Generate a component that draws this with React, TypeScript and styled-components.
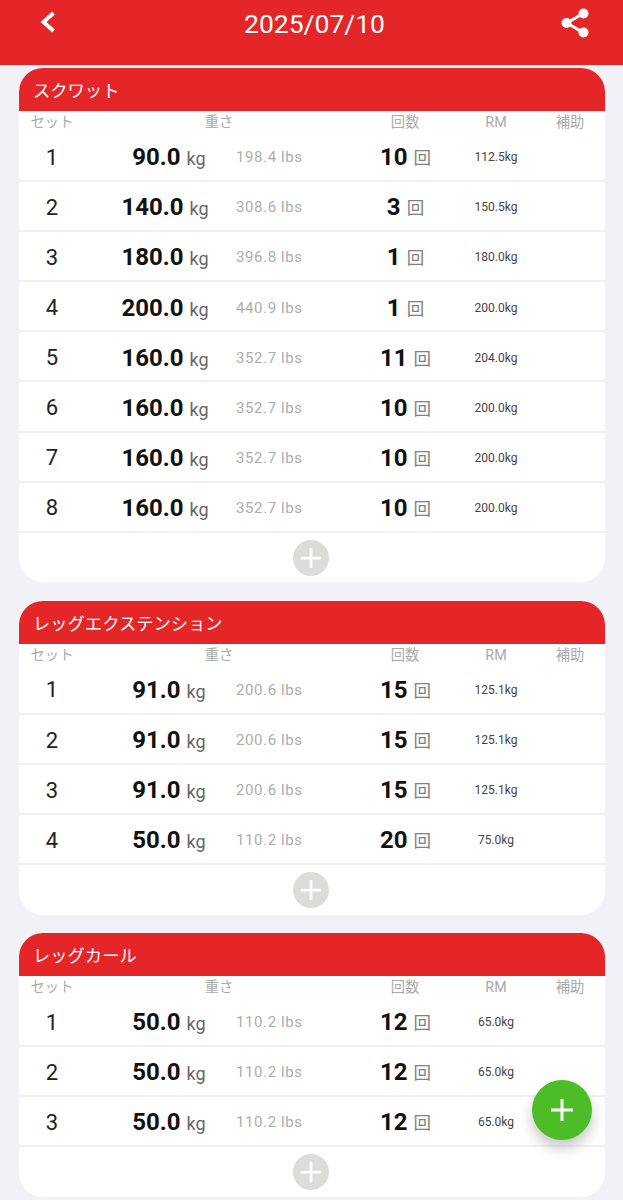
import React from "react";
import styled, { createGlobalStyle } from "styled-components";

const Global = createGlobalStyle`
  html, body { margin: 0; padding: 0; background: #f1f1f7; }
  body { font-family: Roboto, "Noto Sans CJK JP", sans-serif; }
  #root { height: 1200px; overflow: hidden; }
`;

const Page = styled.div`
  position: relative;
  width: 623px;
  height: 1200px;
  overflow: hidden;
`;
const Header = styled.header`
  height: 49px;
  background: #e52629;
  border-bottom: 2px solid #f8f8fb;
  display: grid;
  grid-template-columns: 96px 1fr 96px;
  padding-bottom: 16px;
  color: #fff;
`;
const BackSlot = styled.div`
  padding: 11px 0 0 40px;
`;
const ShareSlot = styled.div`
  padding: 7px 0 0 33px;
`;
const Title = styled.h1`
  margin: 0;
  padding: 7px 0 0 6px;
  text-align: center;
  font: 400 26.5px/33px Roboto, sans-serif;
`;
const List = styled.main`
  padding: 1px 18px 0 19px;
  display: flex;
  flex-direction: column;
  gap: 18.4px;
`;
const Card = styled.section`
  background: #fff;
  border-radius: 24px;
  overflow: hidden;
`;
const CardTitle = styled.h2`
  margin: 0;
  height: 43px;
  background: #e52629;
  color: #fff;
  padding: 0 0 0 14px;
  font: 400 17.3px/43px "Noto Sans CJK JP", sans-serif;
`;
const Columns = "66px 268px 104px 78px 70px";
const ColHead = styled.div`
  display: grid;
  grid-template-columns: ${Columns};
  height: 21px;
  box-sizing: border-box;
  padding-top: 1px;
  text-align: center;
  color: #aaaaaa;
  font: 400 14.3px/21px Roboto, "Noto Sans CJK JP", sans-serif;
`;
const Row = styled.div`
  display: grid;
  grid-template-columns: ${Columns};
  height: 50.1px;
  box-sizing: border-box;
  padding-top: 2.5px;
  border-bottom: 2px solid #f1f1f3;
  align-items: center;
  text-align: center;
`;
const SetNo = styled.div`
  font-size: 22px;
  color: #222;
`;
const Weight = styled.div`
  display: grid;
  grid-template-columns: 134px auto;
  column-gap: 4px;
  padding-left: 13px;
  align-items: center;
  text-align: left;
`;
const WeightMain = styled.div<{ $short: boolean }>`
  text-align: center;
  white-space: nowrap;
  padding-left: ${(p) => (p.$short ? "8px" : "0")};
`;
const Big = styled.b`
  font-size: 24px;
  font-weight: 700;
  color: #111;
`;
const Kg = styled.span`
  font-size: 18px;
  color: #666;
  margin-left: 6px;
`;
const Lbs = styled.div`
  font-size: 15px;
  color: #adadad;
  letter-spacing: 0.6px;
`;
const Reps = styled.div`
  display: flex;
  justify-content: center;
  align-items: center;
  gap: 6px;
  padding-left: 1px;
  white-space: nowrap;
`;
const RepsUnit = styled.span`
  font: 400 17.5px/24px "Noto Sans CJK JP", sans-serif;
  color: #808080;
  opacity: 0.99;
`;
const Rm = styled.div`
  font-size: 12px;
  color: #444;
`;
const AddRow = styled.div`
  height: 49.5px;
  padding-right: 2px;
  display: flex;
  align-items: center;
  justify-content: center;
`;
const AddButton = styled.button`
  width: 36px;
  height: 36px;
  padding: 0;
  border: 0;
  border-radius: 50%;
  background: #dcdcd9;
  display: flex;
  align-items: center;
  justify-content: center;
`;
const Fab = styled.button`
  position: absolute;
  left: 532px;
  top: 1080px;
  width: 60px;
  height: 60px;
  padding: 0;
  border: 0;
  border-radius: 50%;
  background: #4cbc27;
  box-shadow: 0 8px 14px rgba(0, 0, 0, 0.22);
  display: flex;
  align-items: center;
  justify-content: center;
`;

const Plus = ({ size, width }: { size: number; width: number }) => (
  <svg width={size} height={size} viewBox="0 0 24 24">
    <path d="M12 1V23M1 12H23" stroke="#fff" strokeWidth={width} fill="none" />
  </svg>
);

type SetRow = [string, string, string, string];
type Exercise = { name: string; rows: SetRow[] };

const data: Exercise[] = [
  {
    name: "スクワット",
    rows: [
      ["90.0", "198.4", "10", "112.5kg"],
      ["140.0", "308.6", "3", "150.5kg"],
      ["180.0", "396.8", "1", "180.0kg"],
      ["200.0", "440.9", "1", "200.0kg"],
      ["160.0", "352.7", "11", "204.0kg"],
      ["160.0", "352.7", "10", "200.0kg"],
      ["160.0", "352.7", "10", "200.0kg"],
      ["160.0", "352.7", "10", "200.0kg"],
    ],
  },
  {
    name: "レッグエクステンション",
    rows: [
      ["91.0", "200.6", "15", "125.1kg"],
      ["91.0", "200.6", "15", "125.1kg"],
      ["91.0", "200.6", "15", "125.1kg"],
      ["50.0", "110.2", "20", "75.0kg"],
    ],
  },
  {
    name: "レッグカール",
    rows: [
      ["50.0", "110.2", "12", "65.0kg"],
      ["50.0", "110.2", "12", "65.0kg"],
      ["50.0", "110.2", "12", "65.0kg"],
    ],
  },
];

export default function App() {
  return (
    <Page>
      <Global />
      <Header>
        <BackSlot>
          <svg width="16" height="22" viewBox="0 0 16 22">
            <path d="M13.5 2L3.5 11L13.5 20" stroke="#fff" strokeWidth="4" fill="none" />
          </svg>
        </BackSlot>
        <Title>2025/07/10</Title>
        <ShareSlot>
          <svg width="30" height="32" viewBox="0 0 30 32">
            <path d="M23 6.5L7 16L23 25.5" stroke="#fff" strokeWidth="3" fill="none" />
            <circle cx="23.5" cy="6.5" r="5" fill="#fff" />
            <circle cx="6.5" cy="16" r="5" fill="#fff" />
            <circle cx="23.5" cy="25.5" r="5" fill="#fff" />
          </svg>
        </ShareSlot>
      </Header>
      <List>
        {data.map((ex) => (
          <Card key={ex.name}>
            <CardTitle>{ex.name}</CardTitle>
            <ColHead>
              <span>セット</span>
              <span>重さ</span>
              <span>回数</span>
              <span>RM</span>
              <span>補助</span>
            </ColHead>
            {ex.rows.map((r, i) => (
              <Row key={i}>
                <SetNo>{i + 1}</SetNo>
                <Weight>
                  <WeightMain $short={r[0].length < 5}>
                    <Big>{r[0]}</Big>
                    <Kg>kg</Kg>
                  </WeightMain>
                  <Lbs>{r[1]} lbs</Lbs>
                </Weight>
                <Reps>
                  <Big>{r[2]}</Big>
                  <RepsUnit>回</RepsUnit>
                </Reps>
                <Rm>{r[3]}</Rm>
                <div />
              </Row>
            ))}
            <AddRow>
              <AddButton aria-label="add set">
                <Plus size={22} width={3} />
              </AddButton>
            </AddRow>
          </Card>
        ))}
      </List>
      <Fab aria-label="add exercise">
        <Plus size={24} width={3} />
      </Fab>
    </Page>
  );
}
